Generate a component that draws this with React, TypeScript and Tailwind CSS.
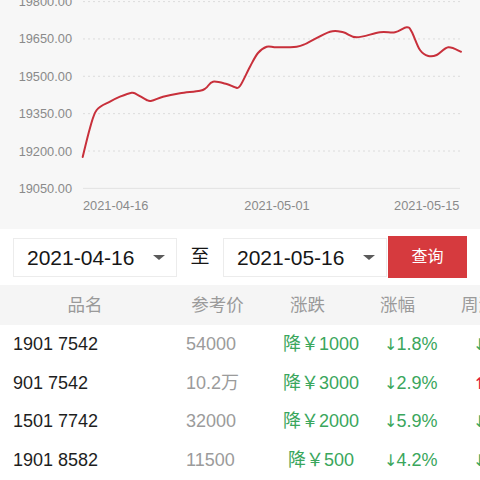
import React from 'react';

const pts: [number, number][] = [
    [82.7, 157], [90, 128], [96.7, 110], [110, 101.7], [120, 96.7], [131.7, 92.7], [136.7, 94.3],
    [146.7, 100], [151.7, 100.7], [163, 96.7], [180, 93.3], [200, 90.7], [206, 88], [213, 81.7],
    [226.7, 84], [235, 87.3], [240, 86], [250, 66.7], [258, 53], [266.7, 46.7], [276.7, 47.3],
    [296.7, 46.7], [306.7, 43.3], [330, 31.7], [343.3, 32.3], [356.7, 37.3], [380, 32.3],
    [395, 32.3], [406.7, 27.3], [411.7, 31.7], [420, 50], [428.3, 56], [436.7, 55],
    [448.3, 47.3], [461, 51.7],
];

function smooth(p: [number, number][]) {
    let d = `M${p[0][0]},${p[0][1]}`;
    for (let i = 0; i < p.length - 1; i++) {
        const p0 = p[i - 1] || p[i];
        const p1 = p[i];
        const p2 = p[i + 1];
        const p3 = p[i + 2] || p2;
        const c1x = p1[0] + (p2[0] - p0[0]) / 6;
        const c1y = p1[1] + (p2[1] - p0[1]) / 6;
        const c2x = p2[0] - (p3[0] - p1[0]) / 6;
        const c2y = p2[1] - (p3[1] - p1[1]) / 6;
        d += ` C${c1x.toFixed(1)},${c1y.toFixed(1)} ${c2x.toFixed(1)},${c2y.toFixed(1)} ${p2[0]},${p2[1]}`;
    }
    return d;
}

const yLabels = ['19800.00', '19650.00', '19500.00', '19350.00', '19200.00', '19050.00'];

const rows = [
    { name: '1901 7542', price: '54000', diff: '降￥1000', pct: '1.8%', week: '↓', wpct: '0.6%', weekUp: false },
    { name: '901 7542', price: '10.2万', diff: '降￥3000', pct: '2.9%', week: '↑', wpct: '1.1%', weekUp: true },
    { name: '1501 7742', price: '32000', diff: '降￥2000', pct: '5.9%', week: '↓', wpct: '2.4%', weekUp: false },
    { name: '1901 8582', price: '11500', diff: '降￥500', pct: '4.2%', week: '↓', wpct: '1.7%', weekUp: false },
];

function Chart() {
    const font = "'Liberation Sans', 'Noto Sans CJK SC', sans-serif";
    return (
        <svg width="480" height="229" viewBox="0 0 480 229">
            {yLabels.map((l, i) => {
                const y = 1.6 + i * 37.35;
                return (
                    <g key={l}>
                        {i < 5 ? (
                            <line x1="83" x2="460" y1={y} y2={y} stroke="#dcdcdc" strokeWidth="1" strokeDasharray="2 3" />
                        ) : (
                            <line x1="83" x2="460" y1={y} y2={y} stroke="#e2e2e2" strokeWidth="1" />
                        )}
                        <text x="72" y={y + 4.5} textAnchor="end" fontSize="12.8" fill="#8a8a8a" fontFamily={font}>{l}</text>
                    </g>
                );
            })}
            <text x="83" y="209.5" fontSize="12.8" fill="#8a8a8a" fontFamily={font}>2021-04-16</text>
            <text x="277" y="209.5" textAnchor="middle" fontSize="12.8" fill="#8a8a8a" fontFamily={font}>2021-05-01</text>
            <text x="459.5" y="209.5" textAnchor="end" fontSize="12.8" fill="#8a8a8a" fontFamily={font}>2021-05-15</text>
            <path d={smooth(pts)} fill="none" stroke="#c8303b" strokeWidth="2" strokeLinecap="round" strokeLinejoin="round" />
        </svg>
    );
}

function DateSelect({ value }: { value: string }) {
    return (
        <div className="w-[164px] shrink-0 h-[39px] bg-white border border-[#ececec] flex items-center justify-between pl-[13px] pr-[11px]">
            <span className="text-[21px] text-[#161616] leading-none">{value}</span>
            <span className="w-0 h-0 mt-[1px] border-l-[6px] border-r-[6px] border-t-[5px] border-l-transparent border-r-transparent border-t-[#5a5a5a]" />
        </div>
    );
}

function Arrow({ c }: { c: string }) {
    return <span className="font-['DejaVu_Sans',sans-serif] text-[16px] mr-[-1px]">{c}</span>;
}

export default function App() {
    return (
        <div className="w-[480px] h-[480px] overflow-hidden bg-white font-['Liberation_Sans','Noto_Sans_CJK_SC',sans-serif]">
            <div className="h-[229px] bg-[#f7f7f7]">
                <Chart />
            </div>

            <div className="h-[56px] flex items-center pl-[13px]">
                <DateSelect value="2021-04-16" />
                <span className="w-[46px] shrink-0 text-center text-[19px] text-[#161616]">至</span>
                <DateSelect value="2021-05-16" />
                <button className="ml-[1px] shrink-0 w-[79px] h-[42px] bg-[#d63a3e] text-white text-[16px]">查询</button>
            </div>

            <div className="h-[40px] bg-[#f5f5f5] flex items-center text-[17.5px] text-[#9a9a9a] whitespace-nowrap">
                <div className="w-[170px] shrink-0 text-center">品名</div>
                <div className="w-[95px] shrink-0 text-center">参考价</div>
                <div className="w-[85px] shrink-0 text-center">涨跌</div>
                <div className="w-[95px] shrink-0 text-center">涨幅</div>
                <div className="shrink-0 pl-[16px]">周涨幅</div>
            </div>

            <div>
                {rows.map((r) => (
                    <div key={r.name} className="h-[38.75px] flex items-center text-[18px] whitespace-nowrap">
                        <div className="w-[170px] shrink-0 pl-[13px] text-[#1e1e1e]">{r.name}</div>
                        <div className="w-[95px] shrink-0 pl-[16px] text-[#9b9b9b]">{r.price}</div>
                        <div className="w-[112px] shrink-0 text-center text-[#3aa65c]">{r.diff}</div>
                        <div className="w-[68px] shrink-0 pl-[7px] text-[#3aa65c]"><Arrow c="↓" />{r.pct}</div>
                        <div className={r.weekUp ? 'shrink-0 pl-[28px] text-[#e0223a]' : 'shrink-0 pl-[28px] text-[#3aa65c]'}>
                            <Arrow c={r.week} />{r.wpct}
                        </div>
                    </div>
                ))}
            </div>
        </div>
    );
}
